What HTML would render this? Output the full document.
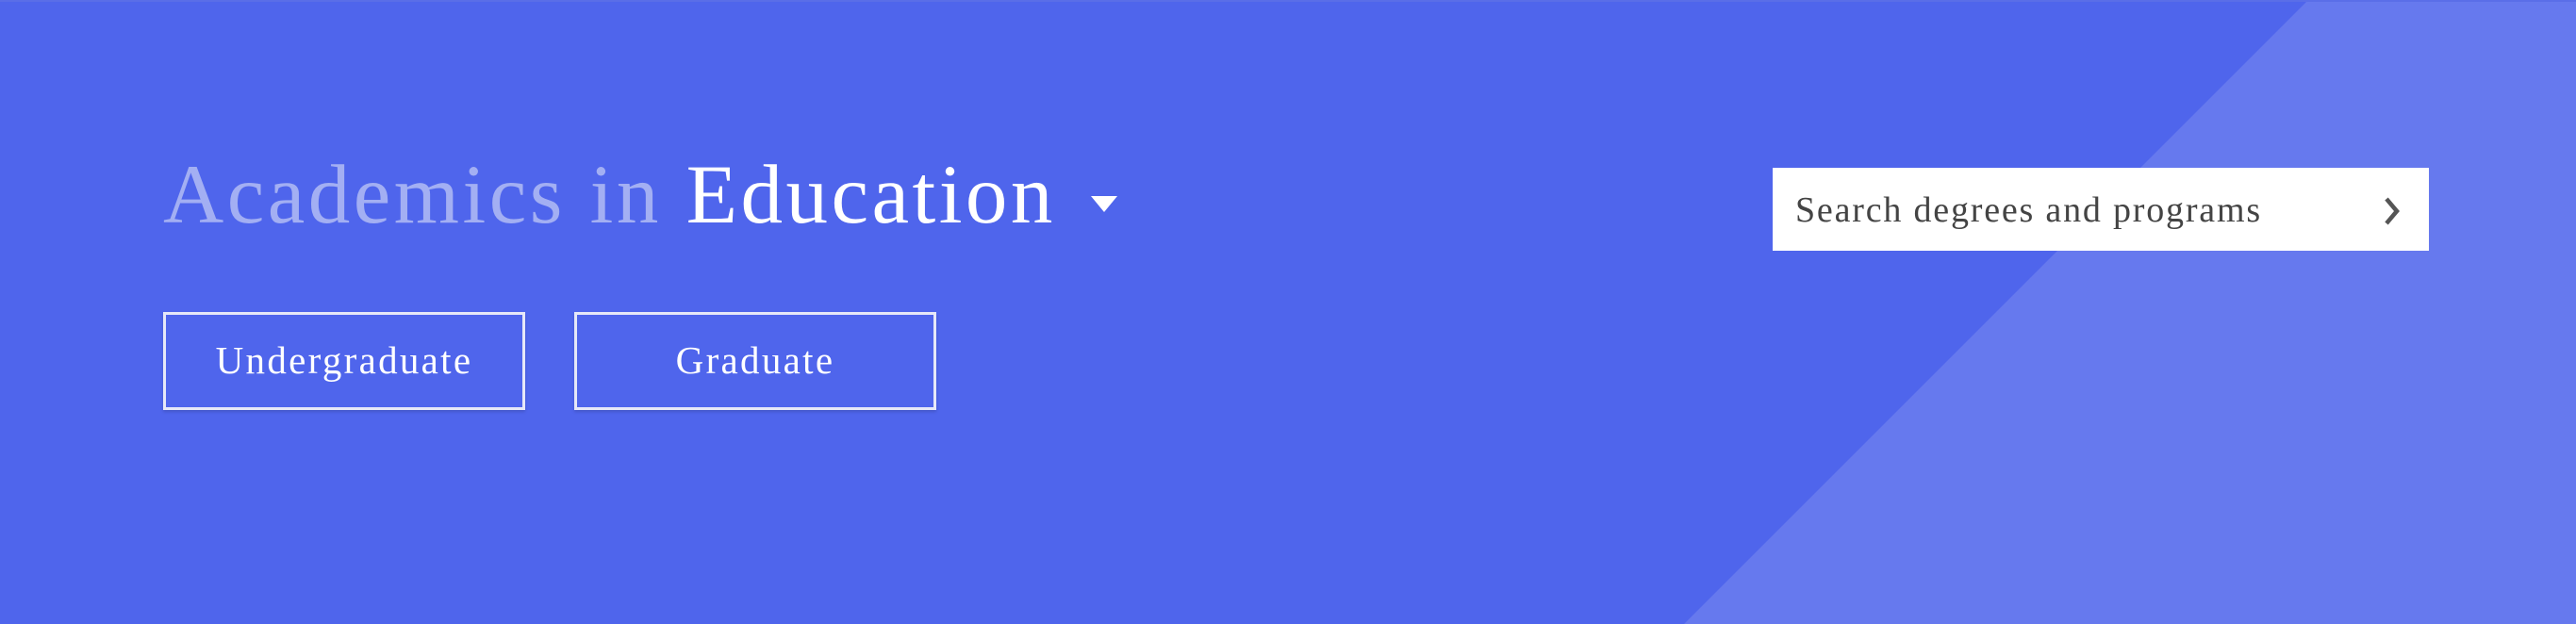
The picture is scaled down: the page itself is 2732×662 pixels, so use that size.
<!DOCTYPE html>
<html><head><style>
html,body{margin:0;padding:0;}
body{width:2732px;height:662px;position:relative;overflow:hidden;background:#4f65ec;font-family:"Liberation Serif",serif;}
.diag{position:absolute;left:0;top:0;}
.title{position:absolute;left:173px;top:152px;font-size:89px;white-space:nowrap;line-height:110px;letter-spacing:3.5px;}
.title .a{color:#a3aff3;}
.title .e{color:#fff;}
.tri{position:absolute;left:1157px;top:208px;width:0;height:0;border-left:14px solid transparent;border-right:14px solid transparent;border-top:17px solid #fff;}
.btn{position:absolute;top:331px;width:378px;height:98px;border:3px solid #e6e8f8;color:#fff;font-size:41px;text-align:center;line-height:96px;letter-spacing:2.3px;box-shadow:0 2px 3px rgba(0,0,0,0.15);}
.search{position:absolute;left:1880px;top:178px;width:696px;height:88px;background:#fff;}
.search span{position:absolute;left:24px;top:1px;line-height:88px;font-size:38px;letter-spacing:1.8px;color:#444;white-space:nowrap;}
.topline{position:absolute;left:0;top:0;width:2732px;height:2px;background:#5a6ee8;}
</style></head><body>
<svg class="diag" width="2732" height="662"><polygon points="2448,0 2732,0 2732,662 1786,662" fill="#6679ee"/></svg>
<div class="topline"></div>
<div class="title"><span class="a">Academics in </span><span class="e">Education</span></div>
<div class="tri"></div>
<div class="btn" style="left:173px">Undergraduate</div>
<div class="btn" style="left:609px">Graduate</div>
<div class="search"><span>Search degrees and programs</span>
<svg style="position:absolute;left:646px;top:31px" width="22" height="30" viewBox="0 0 22 30"><path d="M5 2 L16 15 L5 28" fill="none" stroke="#555" stroke-width="4.5"/></svg>
</div>
</body></html>
